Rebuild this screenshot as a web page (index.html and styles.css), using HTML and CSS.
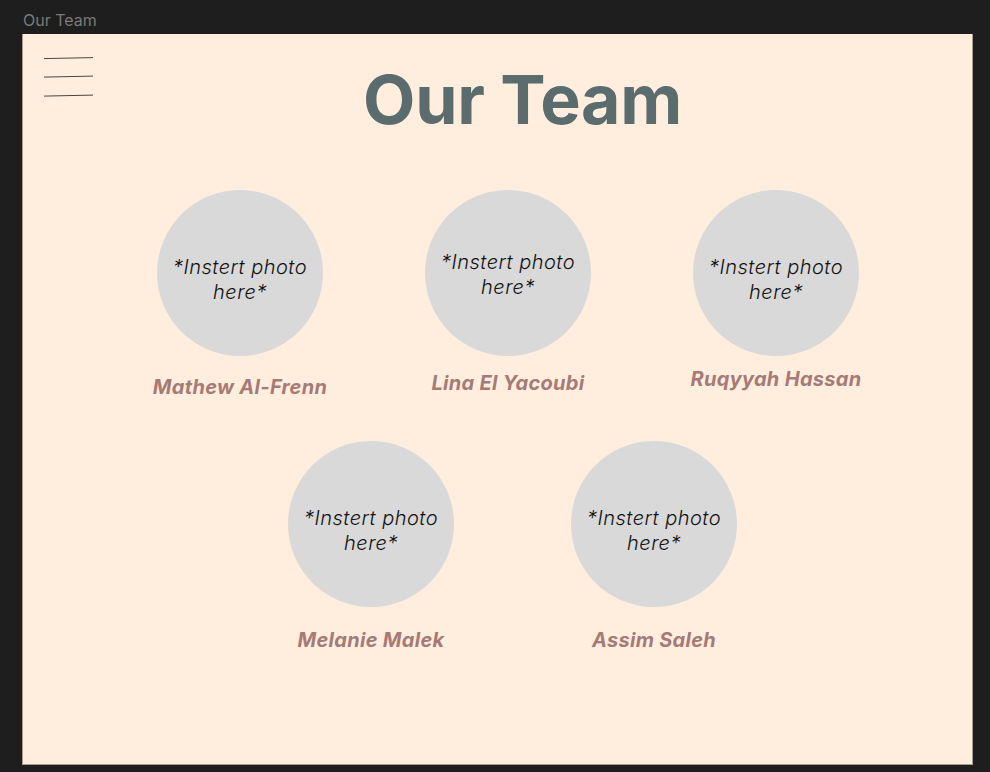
FILE: index.html
```html
<!DOCTYPE html>
<html>
<head>
<meta charset="utf-8">
<link rel="stylesheet" href="styles.css">
</head>
<body>
<div class="label">Our Team</div>
<div class="frame">
  <header class="header">
    <svg class="menu" width="52" height="44" viewBox="0 0 52 44">
      <line x1="1" y1="3.6" x2="50" y2="2.6" stroke="#4a4540" stroke-width="1"/>
      <line x1="1" y1="22.1" x2="50" y2="21.1" stroke="#4a4540" stroke-width="1"/>
      <line x1="1" y1="41.1" x2="50" y2="40.1" stroke="#4a4540" stroke-width="1"/>
    </svg>
    <h1 class="title">Our Team</h1>
  </header>
  <div class="row row-one">
    <div class="card">
      <div class="photo">*Instert photo<br>here*</div>
      <div class="name name-a">Mathew Al-Frenn</div>
    </div>
    <div class="card">
      <div class="photo photo-up">*Instert photo<br>here*</div>
      <div class="name name-b">Lina El Yacoubi</div>
    </div>
    <div class="card">
      <div class="photo">*Instert photo<br>here*</div>
      <div class="name name-c">Ruqyyah Hassan</div>
    </div>
  </div>
  <div class="row row-two">
    <div class="card">
      <div class="photo">*Instert photo<br>here*</div>
      <div class="name name-d">Melanie Malek</div>
    </div>
    <div class="card">
      <div class="photo">*Instert photo<br>here*</div>
      <div class="name name-d">Assim Saleh</div>
    </div>
  </div>
</div>
</body>
</html>
```
FILE: styles.css
```css
html, body {
  margin: 0;
  padding: 0;
  background: #1e1e1e;
  font-family: Inter, "Noto Sans", sans-serif;
}
.label {
  height: 34px;
  box-sizing: border-box;
  padding: 11px 0 0 23px;
  font-size: 16px;
  line-height: 19px;
  color: #7a7a7a;
}
.frame {
  margin-left: 22px;
  width: 951px;
  height: 731px;
  box-sizing: border-box;
  background: #ffeede;
  border: 1px solid #a89c8e;
  border-top: none;
}
.header {
  display: grid;
  grid-template-columns: 1fr auto 1fr;
  align-items: start;
}
.menu {
  grid-column: 1;
  grid-row: 1;
  margin: 21px 0 0 20px;
  display: block;
}
.title {
  grid-column: 2;
  grid-row: 1;
  margin: 29px 0 0 0;
  padding-left: 50px;
  font-size: 68px;
  line-height: 72px;
  font-weight: 700;
  color: #5b6c6e;
  letter-spacing: -0.3px;
}
.row {
  display: flex;
  align-items: flex-start;
}
.row-one {
  margin-top: 55px;
  padding-left: 134px;
  gap: 102px;
}
.row-two {
  margin-top: 42px;
  padding-left: 265px;
  gap: 117px;
}
.card {
  width: 166px;
  display: flex;
  flex-direction: column;
  align-items: center;
}
.photo {
  width: 166px;
  height: 166px;
  border-radius: 50%;
  background: #d9d9d9;
  display: flex;
  align-items: center;
  justify-content: center;
  text-align: center;
  font-size: 20px;
  line-height: 25px;
  font-style: italic;
  font-weight: 300;
  letter-spacing: 0.5px;
  color: #111;
  padding-top: 14px;
  box-sizing: border-box;
}
.photo-up {
  padding-top: 4px;
}
.name {
  white-space: nowrap;
  font-size: 20px;
  line-height: 24px;
  font-weight: 700;
  font-style: italic;
  letter-spacing: 0.3px;
  color: #a67b77;
}
.name-a { margin-top: 19px; }
.name-b { margin-top: 15px; }
.name-c { margin-top: 11px; }
.name-d { margin-top: 21px; }
```
